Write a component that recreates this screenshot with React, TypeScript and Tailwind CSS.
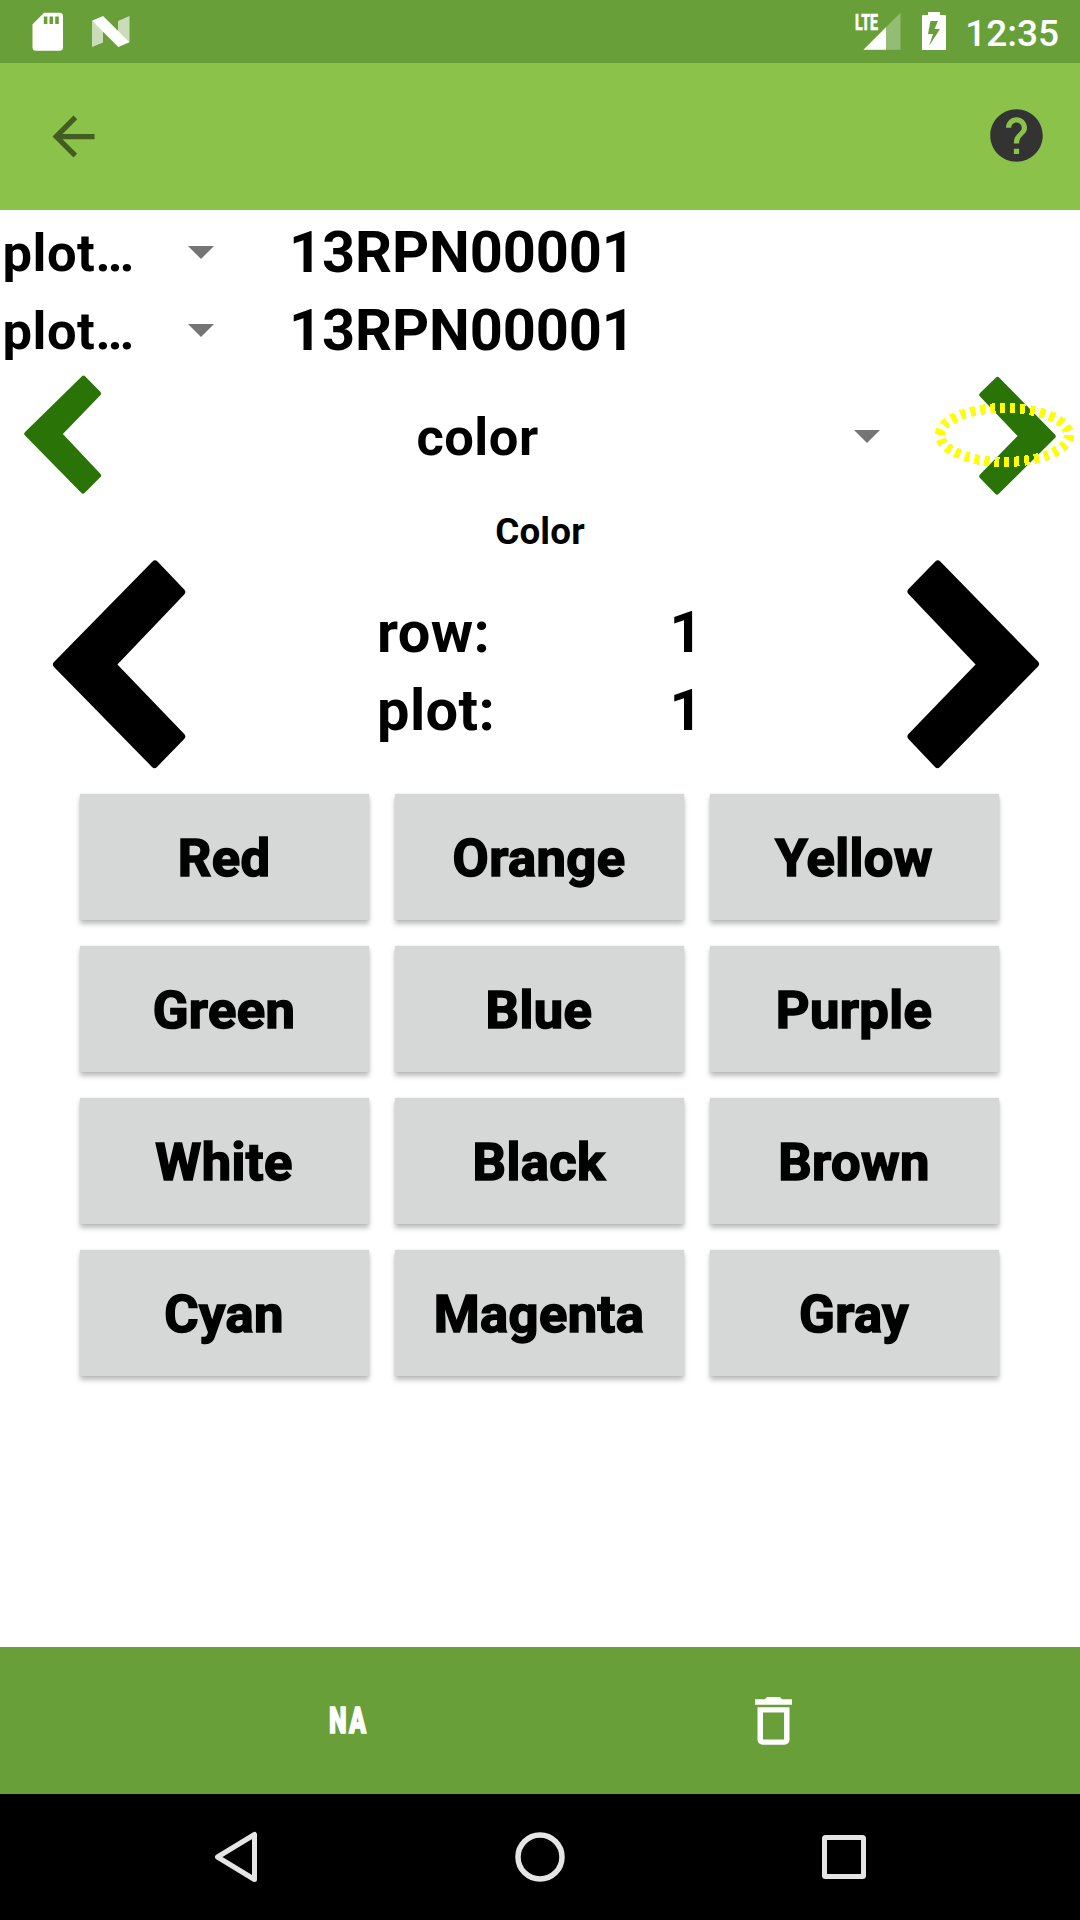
import React from "react";

const COLORS = [
  "Red", "Orange", "Yellow",
  "Green", "Blue", "Purple",
  "White", "Black", "Brown",
  "Cyan", "Magenta", "Gray",
];

function StatusBar() {
  return (
    <header className="flex h-[63px] bg-[#689f38] text-white">
      <svg className="ml-8 mt-3 h-10 w-8 shrink-0" viewBox="0 0 32 40" fill="#fff" fillRule="evenodd">
        <path d="M12 .7h15.500a3.500 3.500 0 0 1 3.500 3.500v31a3.500 3.500 0 0 1-3.500 3.500H4a3.500 3.500 0 0 1-3.500-3.500V12.300zM11.800 4.500V12h3.600V4.500zM17.500 4.500V12h3.600V4.500zM23.200 4.500V12h3.600V4.500z" />
      </svg>
      <svg className="ml-7 mt-4 h-8 w-[38px] shrink-0" viewBox="0 0 38 32" fill="#fff">
        <path d="M0 5v26l11-4.500V14zM26 5v17l11.500 4V0z" opacity=".65" />
        <path d="M0 4.700L11 0l26.500 26.300L26.300 31z" />
      </svg>
      <div className="relative ml-auto mt-3 h-10 w-[47px]">
        <svg className="h-10 w-[47px]" viewBox="0 0 47 40" fill="#fff">
          <path d="M9.500 37.800L46.500 .7v37.100z" opacity=".3" />
          <path d="M9.500 37.800L32 15.200v22.600z" />
        </svg>
        <span className="absolute left-px top-px origin-top-left scale-x-[0.63] text-[22.5px] font-extrabold leading-[19px] [-webkit-text-stroke:0.6px_#fff]">LTE</span>
      </div>
      <svg className="ml-[21px] mt-3 h-[38px] w-6 shrink-0" viewBox="0 0 24 38" fill="#fff" fillRule="evenodd">
        <path d="M6 0h12v3h5a1 1 0 0 1 1 1v34H0V4a1 1 0 0 1 1-1h5zM8.500 9L6 22h5L7 34 18 17h-5.500l3.500-8z" />
      </svg>
      <time className="ml-[18px] mr-[21px] w-[95px] whitespace-nowrap text-right text-[37px] font-medium leading-[67px]">12:35</time>
    </header>
  );
}

function Toolbar() {
  return (
    <div className="flex h-[147px] items-center justify-between bg-[#8bc34a] pl-[42px] pr-[32px]">
      <svg className="h-[63px] w-[63px]" viewBox="0 0 24 24" fill="#435c21">
        <path d="M20 11H7.830l5.590-5.590L12 4l-8 8 8 8 1.410-1.410L7.830 13H20v-2z" />
      </svg>
      <svg className="mb-[2px] h-[63px] w-[63px]" viewBox="0 0 24 24" fill="#333">
        <path d="M12 2C6.480 2 2 6.480 2 12s4.480 10 10 10 10-4.480 10-10S17.520 2 12 2zm1 17h-2v-2h2v2zm2.070-7.750l-.9.920C13.450 12.900 13 13.500 13 15h-2v-.5c0-1.100.45-2.100 1.170-2.830l1.240-1.260c.37-.36.59-.86.59-1.410 0-1.100-.9-2-2-2s-2 .9-2 2H8c0-2.210 1.790-4 4-4s4 1.790 4 4c0 .88-.36 1.680-.93 2.250z" />
      </svg>
    </div>
  );
}

function Caret({ className }: { className: string }) {
  return (
    <svg className={className} viewBox="0 0 26 13" fill="#757575">
      <path d="M0 0h26L13 13z" />
    </svg>
  );
}

function PlotRow() {
  return (
    <div className="flex h-[78px] font-bold">
      <div className="w-[187.5px] pl-[2.5px] text-[52.5px] leading-[81px] tracking-[0.5px]">plot…</div>
      <Caret className="mt-[33px] h-[13px] w-[26px]" />
      <div className="ml-[75.500px] text-[57.75px] leading-[78px] tracking-[-0.1px]">13RPN00001</div>
    </div>
  );
}

function TraitRow() {
  return (
    <div className="flex h-[134px] font-bold">
      <svg className="ml-6 mt-[6px] h-[119px] w-[78px]" viewBox="0 0 78 119" fill="#2a7407" stroke="#2a7407" strokeWidth="5" strokeLinejoin="round">
        <path d="M2.800 58.700L59.500 3.200 74.500 18.500 35.400 58.900 74.500 100.400 59 116z" />
      </svg>
      <div className="ml-[76px] w-[599px] text-center text-[52.5px] leading-[137px] tracking-[0.5px]">color</div>
      <Caret className="ml-[76.500px] mt-[61px] h-[13px] w-[26px]" />
      <div className="relative ml-[54px] h-[134px] w-[142px]">
        <svg className="ml-[45px] mt-[7px] h-[120px] w-[78px]" viewBox="0 0 78 120" fill="#2a7407" stroke="#2a7407" strokeWidth="5" strokeLinejoin="round">
          <path d="M74.200 60.300L18.500 3.500 2.800 18.700 42 60 2.800 100.300 18 116z" />
        </svg>
        <svg className="absolute left-0 top-[32px] h-[68px] w-[142px]" viewBox="0 0 142 68" fill="none" shapeRendering="crispEdges">
          <ellipse cx="70.500" cy="34" rx="64.500" ry="27" stroke="#ff0" strokeWidth="10" strokeDasharray="5 5" />
        </svg>
      </div>
    </div>
  );
}

function PlotNavigator() {
  return (
    <div className="flex h-[235px] font-bold">
      <svg className="ml-[53px] mt-px h-[210px] w-[133px]" viewBox="0 0 133 210" stroke="#000" strokeWidth="7" strokeLinejoin="round">
        <path d="M3.500 104.500L102 4 128.700 32 59.500 104.500 128.700 176.500 101.500 204.500z" />
      </svg>
      <dl className="ml-[191px] grid h-[190px] w-[330px] grid-cols-[292.5px_1fr] grid-rows-[78px_78px] pt-[34px] text-[57.75px] leading-[78px] tracking-[0.4px]">
        <dt>row:</dt>
        <dd>1</dd>
        <dt>plot:</dt>
        <dd>1</dd>
      </dl>
      <svg className="ml-[200px] mt-px h-[210px] w-[133px]" viewBox="0 0 133 210" stroke="#000" strokeWidth="7" strokeLinejoin="round">
        <path d="M128.500 104L30.800 4 4 31.500 73.500 104.500 4 176.500 30.500 204.500z" />
      </svg>
    </div>
  );
}

function BottomBar() {
  return (
    <div className="flex h-[147px] bg-[#689f38] text-white">
      <div className="ml-[328.500px] mt-[55px] w-[413.5px]">
        <span className="block w-[60px] origin-left scale-x-[0.68] text-[37px] font-black leading-[37px] tracking-[3px] [-webkit-text-stroke:1.5px_#fff]">NA</span>
      </div>
      <svg className="ml-[13px] mt-[50px] h-12 w-[37px]" viewBox="0 0 37 48" fill="#fff" fillRule="evenodd">
        <path d="M0 2.300h10L12 0h13l2 2.300h10v5.400H0zM2.500 10.300h32v32.500a5 5 0 0 1-5 5h-22a5 5 0 0 1-5-5zM8 15.600v26.800h21V15.600z" />
      </svg>
    </div>
  );
}

function NavigationBar() {
  return (
    <nav className="flex h-[126px] items-center bg-black">
      <svg className="ml-[214px] h-[52px] w-11" viewBox="0 0 44 52" fill="none" stroke="#e5e5e5" strokeWidth="5" strokeLinejoin="round">
        <path d="M3.500 26L40.500 3.500v45z" />
      </svg>
      <svg className="ml-[256px] h-[52px] w-[52px]" viewBox="0 0 52 52" fill="none" stroke="#e5e5e5" strokeWidth="5.500">
        <circle cx="26" cy="26" r="22" />
      </svg>
      <svg className="ml-[256px] h-11 w-11" viewBox="0 0 44 44" fill="none" stroke="#e5e5e5" strokeWidth="5">
        <rect x="2.500" y="2.500" width="39" height="39" rx="1" />
      </svg>
    </nav>
  );
}

export default function App() {
  return (
    <div className="flex h-[1920px] w-[1080px] flex-col overflow-hidden bg-white font-['Roboto',sans-serif] text-black">
      <StatusBar />
      <Toolbar />
      <main className="flex flex-1 flex-col pt-[3px]">
        <PlotRow />
        <PlotRow />
        <TraitRow />
        <div className="h-[56px] pt-px text-center text-[36.75px] font-bold leading-[56px] tracking-[0.2px]">Color</div>
        <PlotNavigator />
        <div className="ml-20 grid w-[919px] grid-cols-3 gap-[26px]">
          {COLORS.map((color) => (
            <button
              key={color}
              className="h-[126px] bg-[#d6d8d7] pr-px pt-[3px] text-[52.5px] font-bold leading-[123px] tracking-[0.4px] shadow-[0_4px_5px_rgba(0,0,0,0.26),0_0_2px_rgba(0,0,0,0.1)] [-webkit-text-stroke:1.6px_#000]"
            >
              {color}
            </button>
          ))}
        </div>
      </main>
      <BottomBar />
      <NavigationBar />
    </div>
  );
}
